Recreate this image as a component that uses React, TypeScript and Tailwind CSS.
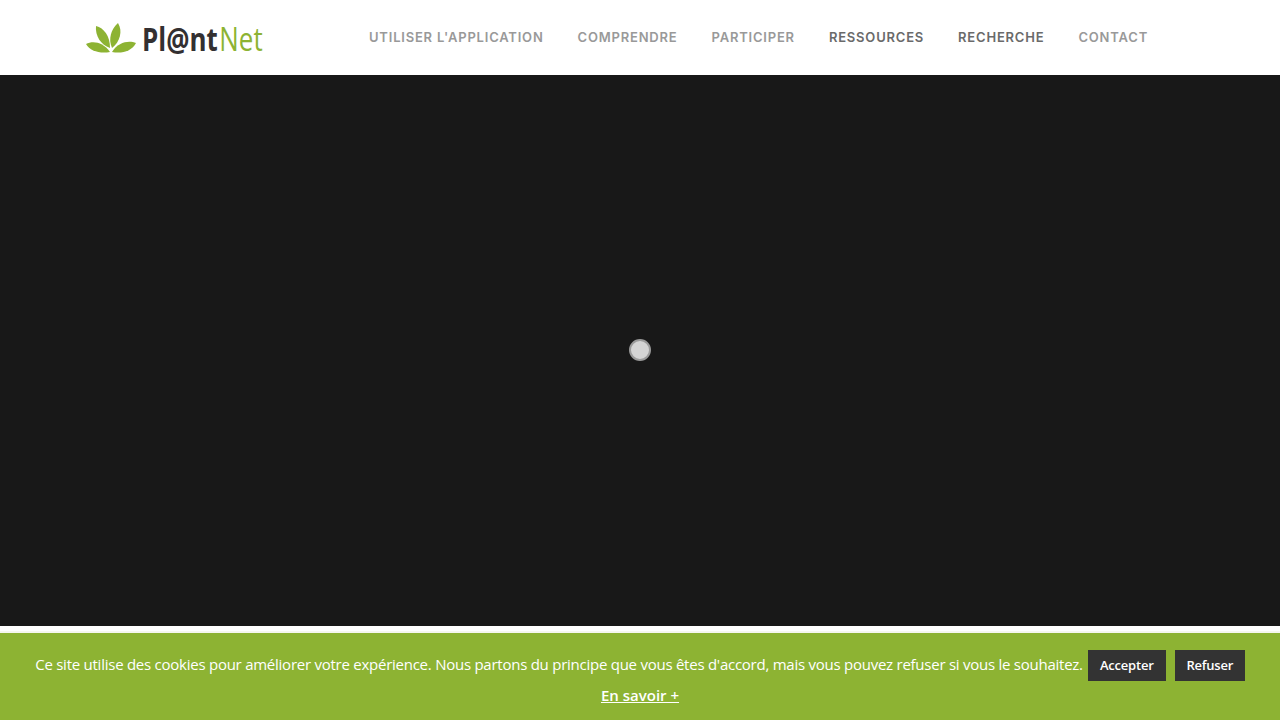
const navItems = [
  { label: "UTILISER L'APPLICATION", dark: false },
  { label: 'COMPRENDRE', dark: false },
  { label: 'PARTICIPER', dark: false },
  { label: 'RESSOURCES', dark: true },
  { label: 'RECHERCHE', dark: true },
  { label: 'CONTACT', dark: false },
];

function LeafLogo() {
  return (
    <svg width="50" height="32" viewBox="0 0 50 32" className="shrink-0">
      <g fill="#8db333">
        <path d="M0 22C7 18.500 17 20 24 30C14 32 4 29 0 22Z" />
        <path d="M50 21C43 18 32 20 26 30C36 32 46 29 50 21Z" />
        <path d="M10 4C18 6 24 14 24 26C15 23 9 14 10 4Z" />
        <path d="M32 1C37 9 34 20 26 26C22 17 25 7 32 1Z" />
      </g>
    </svg>
  );
}

export default function App() {
  return (
    <div className="h-[720px] w-[1280px] overflow-hidden bg-white relative font-['Open_Sans',sans-serif]">
      <header className="h-[75px] flex items-center pl-[86px]">
        <a href="#" className="flex items-center w-[283px]">
          <LeafLogo />
          <span className="ml-[6px] mt-[3px] flex text-[32px] leading-none origin-left scale-x-[0.81] font-['Open_Sans',sans-serif]">
            <span className="font-bold text-[#333031]">Pl@nt</span>
            <span className="ml-[2px] text-[#8db333]">Net</span>
          </span>
        </a>
        <nav className="flex items-center gap-[34px]">
          {navItems.map(item => (
            <a
              key={item.label}
              href="#"
              className={`text-[13px] font-semibold tracking-[0.8px] font-['Inter',sans-serif] ${item.dark ? 'text-[#6a6a6a]' : 'text-[#999999]'}`}
            >
              {item.label}
            </a>
          ))}
        </nav>
      </header>

      <main className="h-[551px] bg-[#181818] flex items-center justify-center">
        <div className="mb-[1px] h-[22px] w-[22px] rounded-full bg-[#d4d4d4] border-2 border-[#9a9a9a]" />
      </main>
      <div className="h-[94px] bg-white" />

      <div className="absolute bottom-0 left-0 right-0 h-[87px] bg-[#8db333] text-white text-center shadow-[0_-2px_0_#f6f7f0]">
        <div className="flex items-center justify-center h-[31px] mt-[17px]">
          <span className="text-[15px] tracking-[-0.25px] relative -top-[1px]">
            Ce site utilise des cookies pour améliorer votre expérience. Nous partons du principe que vous êtes d'accord, mais vous pouvez refuser si vous le souhaitez.
          </span>
          <button className="ml-[5px] h-[31px] w-[78px] bg-[#333333] text-[13px] font-semibold tracking-[-0.2px]">Accepter</button>
          <button className="ml-[9px] h-[31px] w-[70px] bg-[#333333] text-[13px] font-semibold tracking-[-0.2px]">Refuser</button>
        </div>
        <a href="#" className="block mt-[2px] text-[15px] font-semibold underline leading-[24px]">En savoir +</a>
      </div>
    </div>
  );
}
